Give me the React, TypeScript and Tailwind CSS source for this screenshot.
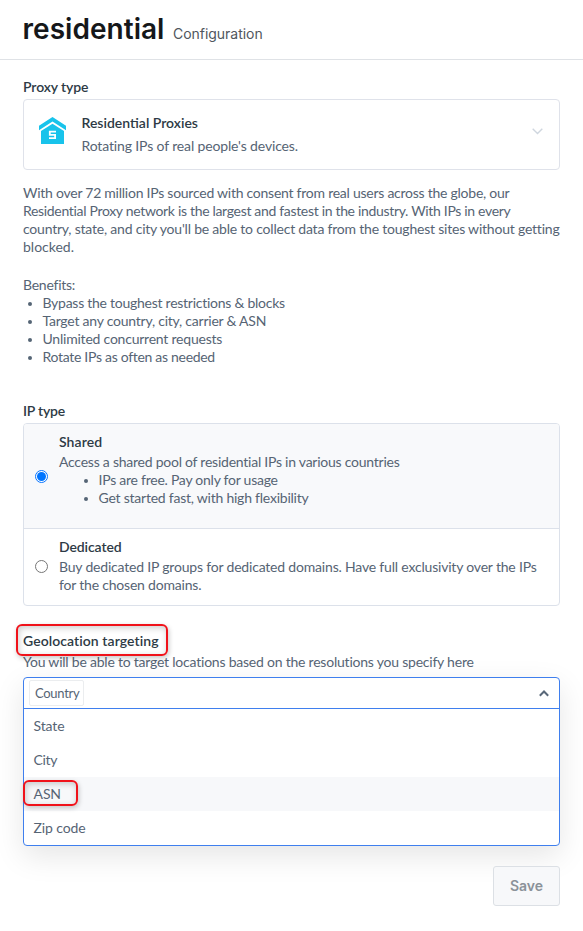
import type { ReactNode } from "react";

function Label({ children, className = "" }: { children: ReactNode; className?: string }) {
  return <h2 className={`h-[18px] whitespace-nowrap font-semibold text-[#2d3a45] ${className}`}>{children}</h2>;
}

function Line({ children, className = "" }: { children: ReactNode; className?: string }) {
  return <span className={`block h-[18px] whitespace-nowrap ${className}`}>{children}</span>;
}

function Bullet({ children, className = "" }: { children: ReactNode; className?: string }) {
  return (
    <li className="flex h-[18px] items-center">
      <span className="mt-[2px] mr-[10.5px] size-[4px] shrink-0 rounded-full bg-[#556575]" />
      <span className={`whitespace-nowrap ${className}`}>{children}</span>
    </li>
  );
}

function HouseIcon() {
  return (
    <svg width="27" height="27" viewBox="0 0 27 27" fill="#18c3eb">
      <path d="M13.5 0 27 8.8v4.4L13.5 4.5 0 13.2V8.8Z" />
      <path d="M2 14 13.5 6.8 25 14v13H2Z" />
      <path d="M17 14.7h-6.2v3.1h5.3v3.3H10" fill="none" stroke="#fff" strokeWidth="1.8" />
    </svg>
  );
}

export default function App() {
  return (
    <main className="h-[931px] w-[583px] overflow-hidden bg-white font-['Lato','Noto_Sans',sans-serif] text-[14px] leading-[18px] text-[#566474]">
      <header className="flex h-[60px] items-baseline border-b border-[#dfe2e6] pl-[22.5px] font-['Inter',sans-serif]">
        <h1 className="pt-[11px] text-[28px] leading-[36px] font-semibold tracking-[0.04px] whitespace-nowrap text-[#15171a]">residential</h1>
        <span className="ml-[8.5px] text-[14px] tracking-[-0.03px] whitespace-nowrap text-[#50565d]">Configuration</span>
      </header>

      <div className="px-[23px] pt-[18px]">
        <Label className="tracking-[-0.1px]">Proxy type</Label>
        <section className="mt-[3px] flex h-[71px] items-start rounded-[4px] border border-[#dfe2ea] pt-[14px] pr-[16px] pl-[15px]">
          <div className="mt-[3px]"><HouseIcon /></div>
          <div className="ml-[15.5px] flex-1">
            <Label>Residential Proxies</Label>
            <Line className="mt-[5px] tracking-[-0.14px]">Rotating IPs of real people's devices.</Line>
          </div>
          <svg className="mt-[14px]" width="11" height="7" viewBox="0 0 11 7" fill="none" stroke="#cfd6df" strokeWidth="1.4">
            <path d="m.7.8 4.8 4.8L10.3.8" />
          </svg>
        </section>

        <p className="mt-[14px]">
          <Line className="tracking-[-0.25px]">With over 72 million IPs sourced with consent from real users across the globe, our</Line>
          <Line className="tracking-[-0.32px]">Residential Proxy network is the largest and fastest in the industry. With IPs in every</Line>
          <Line className="tracking-[-0.21px]">country, state, and city you'll be able to collect data from the toughest sites without getting</Line>
          <Line>blocked.</Line>
        </p>
        <div className="mt-[20px]">
          <Line className="tracking-[-0.25px]">Benefits:</Line>
          <ul className="pl-[5px]">
            <Bullet className="tracking-[-0.26px]">Bypass the toughest restrictions &amp; blocks</Bullet>
            <Bullet className="tracking-[-0.23px]">Target any country, city, carrier &amp; ASN</Bullet>
            <Bullet className="tracking-[-0.22px]">Unlimited concurrent requests</Bullet>
            <Bullet className="tracking-[-0.3px]">Rotate IPs as often as needed</Bullet>
          </ul>
        </div>

        <Label className="mt-[36px] tracking-[-0.2px]">IP type</Label>
        <section className="mt-[3px] h-[183px] overflow-hidden rounded-[4px] border border-[#dce1ea]">
          <label className="flex h-[105px] items-center border-b border-[#dce1ea] bg-[#f8f9fb] pl-[11px]">
            <span className="flex size-[13px] shrink-0 items-center justify-center rounded-full border border-[#0875ff] bg-white">
              <span className="size-[9px] rounded-full bg-[#0075ff]" />
            </span>
            <div className="ml-[11px] h-[87px]">
              <Label className="tracking-[0.08px]">Shared</Label>
              <Line className="mt-[2px] tracking-[-0.24px]">Access a shared pool of residential IPs in various countries</Line>
              <ul className="pl-[25px]">
                <Bullet className="tracking-[-0.25px]">IPs are free. Pay only for usage</Bullet>
                <Bullet className="tracking-[-0.23px]">Get started fast, with high flexibility</Bullet>
              </ul>
            </div>
          </label>
          <label className="flex h-[75px] items-center pl-[11px]">
            <span className="size-[13px] shrink-0 rounded-full border border-[#767676] bg-white" />
            <div className="ml-[11px] h-[57px]">
              <Label className="tracking-[-0.1px]">Dedicated</Label>
              <Line className="mt-[2px] tracking-[-0.19px]">Buy dedicated IP groups for dedicated domains. Have full exclusivity over the IPs</Line>
              <Line className="tracking-[-0.2px]">for the chosen domains.</Line>
            </div>
          </label>
        </section>

        <div className="relative mt-[26px] h-[18px]">
          <Label className="tracking-[0.07px]">Geolocation targeting</Label>
          <span className="absolute -top-[8px] -left-[7px] h-[32px] w-[151.5px] rounded-[6px] border-2 border-[#f0121a] shadow-[1px_2px_5px_rgba(0,0,0,0.22),inset_1px_2px_6px_rgba(0,0,0,0.2)]" />
        </div>
        <Line className="mt-[3px] tracking-[-0.22px]">You will be able to target locations based on the resolutions you specify here</Line>

        <section className="mt-[6px] h-[169px] rounded-[4px] border border-[#3f7fee] bg-white shadow-[0_10px_30px_rgba(0,0,0,0.1)]">
          <div className="flex h-[31px] items-center justify-between border-b border-[#3f7fee] pr-[10px] pl-[5px]">
            <span className="flex h-[26px] w-[55px] items-center rounded-[2px] border border-[#ebedef] pl-[5px] text-[13px] tracking-[-0.3px]">Country</span>
            <svg width="10" height="7" viewBox="0 0 10 7" fill="none" stroke="#596879" strokeWidth="2">
              <path d="m.8 5.8 4.2-4.3 4.2 4.3" />
            </svg>
          </div>
          <ul className="tracking-[-0.1px]">
            <li className="flex h-[34px] items-center pl-[9.5px]">State</li>
            <li className="flex h-[34px] items-center pl-[9.5px] tracking-[-0.3px]">City</li>
            <li className="relative flex h-[34px] items-center bg-[#f7f8fa] pl-[9.5px]">
              ASN
              <span className="absolute top-[3px] -left-px h-[26px] w-[55px] rounded-[6px] border-2 border-[#f0121a] shadow-[1px_2px_5px_rgba(0,0,0,0.2),inset_1px_2px_6px_rgba(0,0,0,0.2)]" />
            </li>
            <li className="flex h-[34px] items-center pl-[9.5px]">Zip code</li>
          </ul>
        </section>

        <div className="relative mt-[20px] flex justify-end">
          <button className="h-[40px] w-[67px] rounded-[3px] border border-[#dce0e5] bg-[#f7f8fa] font-['Inter',sans-serif] text-[14px] font-semibold text-[#8b9299]">Save</button>
        </div>
      </div>
    </main>
  );
}
